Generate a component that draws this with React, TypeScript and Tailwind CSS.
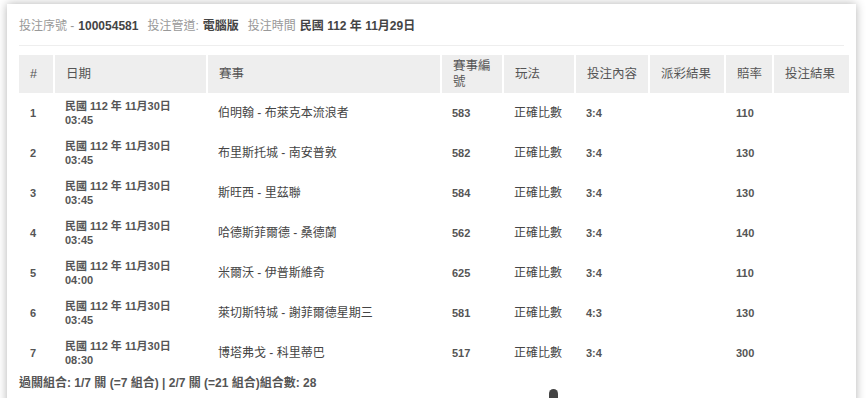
import React from "react";

interface Bet {
  no: number;
  date: string;
  time: string;
  match: string;
  code: string;
  play: string;
  pick: string;
  payout: string;
  odds: string;
  result: string;
}

const bets: Bet[] = [
  { no: 1, date: "民國 112 年 11月30日", time: "03:45", match: "伯明翰 - 布萊克本流浪者", code: "583", play: "正確比數", pick: "3:4", payout: "", odds: "110", result: "" },
  { no: 2, date: "民國 112 年 11月30日", time: "03:45", match: "布里斯托城 - 南安普敦", code: "582", play: "正確比數", pick: "3:4", payout: "", odds: "130", result: "" },
  { no: 3, date: "民國 112 年 11月30日", time: "03:45", match: "斯旺西 - 里茲聯", code: "584", play: "正確比數", pick: "3:4", payout: "", odds: "130", result: "" },
  { no: 4, date: "民國 112 年 11月30日", time: "03:45", match: "哈德斯菲爾德 - 桑德蘭", code: "562", play: "正確比數", pick: "3:4", payout: "", odds: "140", result: "" },
  { no: 5, date: "民國 112 年 11月30日", time: "04:00", match: "米爾沃 - 伊普斯維奇", code: "625", play: "正確比數", pick: "3:4", payout: "", odds: "110", result: "" },
  { no: 6, date: "民國 112 年 11月30日", time: "03:45", match: "萊切斯特城 - 謝菲爾德星期三", code: "581", play: "正確比數", pick: "4:3", payout: "", odds: "130", result: "" },
  { no: 7, date: "民國 112 年 11月30日", time: "08:30", match: "博塔弗戈 - 科里蒂巴", code: "517", play: "正確比數", pick: "3:4", payout: "", odds: "300", result: "" },
];

const headers = ["#", "日期", "賽事", "賽事編號", "玩法", "投注內容", "派彩結果", "賠率", "投注結果"];
const widths = [35, 153, 234, 62, 72, 74, 76, 48, 76];

export default function App() {
  return (
    <div
      className="relative w-[867px] h-[398px] overflow-hidden bg-white text-[#333]"
      style={{ fontFamily: '"Liberation Sans", "Noto Sans CJK TC", Arial, sans-serif' }}
    >
      <div className="ml-[7px] mt-[4px] w-[849px] h-[420px] bg-white px-[12px] pt-[13px] shadow-[0_0_9px_rgba(0,0,0,0.3)]">
        <div className="flex items-center h-[18px] text-[12px]">
          <span className="text-[#999]">投注序號 -</span>
          <span className="ml-[4px] font-bold text-[#444]">100054581</span>
          <span className="ml-[9px] text-[#999]">投注管道:</span>
          <span className="ml-[4px] font-bold text-[#444]">電腦版</span>
          <span className="ml-[9px] text-[#999]">投注時間</span>
          <span className="ml-[4px] font-bold text-[#444]">民國 112 年 11月29日</span>
        </div>
        <div className="mt-[10px] border-t border-[#eee]" />
        <table className="mt-[9px] w-[830px] table-fixed border-collapse">
          <colgroup>
            {widths.map((w, i) => (
              <col key={i} style={{ width: w }} />
            ))}
          </colgroup>
          <thead>
            <tr className="h-[38px] bg-[#eee]">
              {headers.map((h, i) => (
                <th
                  key={i}
                  className={
                    "px-[11px] text-left align-middle text-[12.5px] font-normal leading-[16px] text-[#555] " +
                    (i > 0 ? "border-l-2 border-white " : "") +
                    (i === 3 ? "" : "whitespace-nowrap")
                  }
                >
                  {i === 3 ? (
                    <>
                      賽事編
                      <br />號
                    </>
                  ) : (
                    h
                  )}
                </th>
              ))}
            </tr>
          </thead>
          <tbody>
            {bets.map((b) => (
              <tr key={b.no} className="h-[40px] text-[11px]">
                <td className="px-[11px] font-bold text-[#555]">{b.no}</td>
                <td className="px-[11px] font-bold leading-[14px] text-[#555]">
                  <div>{b.date}</div>
                  <div>{b.time}</div>
                </td>
                <td className="px-[11px] text-[12px] text-[#444]">{b.match}</td>
                <td className="px-[11px] font-bold text-[#555]">{b.code}</td>
                <td className="px-[11px] text-[12px] text-[#444]">{b.play}</td>
                <td className="px-[11px] font-bold text-[#555]">{b.pick}</td>
                <td className="px-[11px]">{b.payout}</td>
                <td className="px-[11px] font-bold text-[#555]">{b.odds}</td>
                <td className="px-[11px]">{b.result}</td>
              </tr>
            ))}
          </tbody>
        </table>
        <div className="mt-[1px] text-[12px] font-bold text-[#555]">
          過關組合: 1/7 關 (=7 組合) | 2/7 關 (=21 組合)組合數: 28
        </div>
      </div>
      <div className="absolute left-[549px] top-[389px] h-[12px] w-[9px] rounded-t-full bg-[#444]" />
    </div>
  );
}
